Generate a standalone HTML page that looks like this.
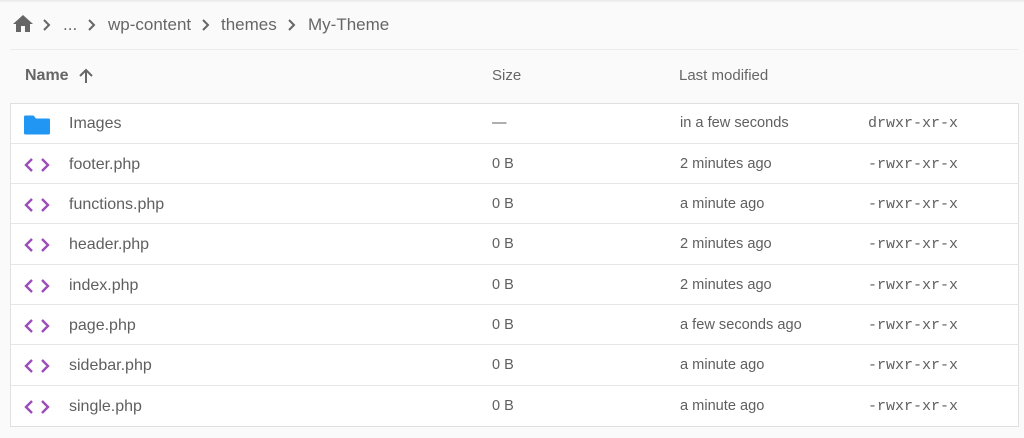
<!DOCTYPE html>
<html><head><style>
body{margin:0;width:1024px;height:438px;background:#fafafa;font-family:"Liberation Sans",sans-serif;color:#5f5f5f;position:relative;overflow:hidden}
.top{position:absolute;left:0;top:0;width:1024px;height:3px;background:linear-gradient(#e8e8e8,#fafafa)}
.b{position:absolute;top:15px;font-size:17px;color:#666}
.ch{position:absolute;top:16px}
.sep{position:absolute;left:10px;top:49px;width:1008px;height:1px;background:#ececec}
.hd{position:absolute;top:67px;font-size:15px;color:#666}
.tbl{position:absolute;left:10px;top:103px;width:1007px;height:322px;border:1px solid #e0e0e0;background:#fff}
.row{position:absolute;left:0;width:1007px;height:40px;border-top:1px solid #e6e6e6}
.row div{position:absolute;top:12px;font-size:16px}
.n{left:58px}.s{left:481px;font-size:14.5px!important;top:12px!important}.m{left:669px;font-size:14.6px!important;top:12px!important}
.p{left:857px;font-family:"Liberation Mono",monospace;font-size:15px!important;top:12px!important}
.ic{position:absolute;left:12px;top:12px}
</style></head><body>
<div class="top"></div>
<svg style="position:absolute;left:13px;top:15px" width="20" height="18" viewBox="0 0 20 18"><path d="M8 17v-6h4v6h5V9h3L10 0 0 9h3v8z" fill="#666"/></svg>
<svg class="ch" style="left:41px" width="12" height="18" viewBox="0 0 12 18"><path d="M3 4l5 5-5 5" stroke="#666" stroke-width="2" fill="none"/></svg>
<div class="b" style="left:63px">...</div>
<svg class="ch" style="left:86px" width="12" height="18" viewBox="0 0 12 18"><path d="M3 4l5 5-5 5" stroke="#666" stroke-width="2" fill="none"/></svg>
<div class="b" style="left:108px">wp-content</div>
<svg class="ch" style="left:200px" width="12" height="18" viewBox="0 0 12 18"><path d="M3 4l5 5-5 5" stroke="#666" stroke-width="2" fill="none"/></svg>
<div class="b" style="left:221px">themes</div>
<svg class="ch" style="left:286px" width="12" height="18" viewBox="0 0 12 18"><path d="M3 4l5 5-5 5" stroke="#666" stroke-width="2" fill="none"/></svg>
<div class="b" style="left:308px">My-Theme</div>
<div class="sep"></div>
<div class="hd" style="left:25px;font-weight:bold;font-size:16px;top:67px">Name</div>
<svg style="position:absolute;left:77px;top:67px" width="18" height="18" viewBox="0 0 18 18"><path d="M9 16V3M3 9l6-6 6 6" stroke="#666" stroke-width="2" fill="none"/></svg>
<div class="hd" style="left:492px">Size</div>
<div class="hd" style="left:679px">Last modified</div>
<div class="tbl">
<div class="row" style="top:-1px;border-top:none"><svg class="ic" width="28" height="20" viewBox="0 0 28 20"><path d="M1 2a1.5 1.5 0 0 1 1.5-1.5h8l2.5 3h12.5a1.5 1.5 0 0 1 1.5 1.5v13a1.5 1.5 0 0 1-1.5 1.5h-23A1.5 1.5 0 0 1 1 18z" fill="#2196f3"/></svg><div class="n">Images</div><div class="s">—</div><div class="m">in a few seconds</div><div class="p">drwxr-xr-x</div></div>
<div class="row" style="top:39px"><svg class="ic" width="28" height="18" viewBox="0 0 28 18"><path d="M9 3L3 9l6 6M19 3l6 6-6 6" stroke="#9b4dba" stroke-width="2.4" fill="none"/></svg><div class="n">footer.php</div><div class="s">0 B</div><div class="m">2 minutes ago</div><div class="p">-rwxr-xr-x</div></div>
<div class="row" style="top:79px"><svg class="ic" width="28" height="18" viewBox="0 0 28 18"><path d="M9 3L3 9l6 6M19 3l6 6-6 6" stroke="#9b4dba" stroke-width="2.4" fill="none"/></svg><div class="n">functions.php</div><div class="s">0 B</div><div class="m">a minute ago</div><div class="p">-rwxr-xr-x</div></div>
<div class="row" style="top:119px"><svg class="ic" width="28" height="18" viewBox="0 0 28 18"><path d="M9 3L3 9l6 6M19 3l6 6-6 6" stroke="#9b4dba" stroke-width="2.4" fill="none"/></svg><div class="n">header.php</div><div class="s">0 B</div><div class="m">2 minutes ago</div><div class="p">-rwxr-xr-x</div></div>
<div class="row" style="top:160px"><svg class="ic" width="28" height="18" viewBox="0 0 28 18"><path d="M9 3L3 9l6 6M19 3l6 6-6 6" stroke="#9b4dba" stroke-width="2.4" fill="none"/></svg><div class="n">index.php</div><div class="s">0 B</div><div class="m">2 minutes ago</div><div class="p">-rwxr-xr-x</div></div>
<div class="row" style="top:200px"><svg class="ic" width="28" height="18" viewBox="0 0 28 18"><path d="M9 3L3 9l6 6M19 3l6 6-6 6" stroke="#9b4dba" stroke-width="2.4" fill="none"/></svg><div class="n">page.php</div><div class="s">0 B</div><div class="m">a few seconds ago</div><div class="p">-rwxr-xr-x</div></div>
<div class="row" style="top:240px"><svg class="ic" width="28" height="18" viewBox="0 0 28 18"><path d="M9 3L3 9l6 6M19 3l6 6-6 6" stroke="#9b4dba" stroke-width="2.4" fill="none"/></svg><div class="n">sidebar.php</div><div class="s">0 B</div><div class="m">a minute ago</div><div class="p">-rwxr-xr-x</div></div>
<div class="row" style="top:281px"><svg class="ic" width="28" height="18" viewBox="0 0 28 18"><path d="M9 3L3 9l6 6M19 3l6 6-6 6" stroke="#9b4dba" stroke-width="2.4" fill="none"/></svg><div class="n">single.php</div><div class="s">0 B</div><div class="m">a minute ago</div><div class="p">-rwxr-xr-x</div></div>
</div>
</body></html>
